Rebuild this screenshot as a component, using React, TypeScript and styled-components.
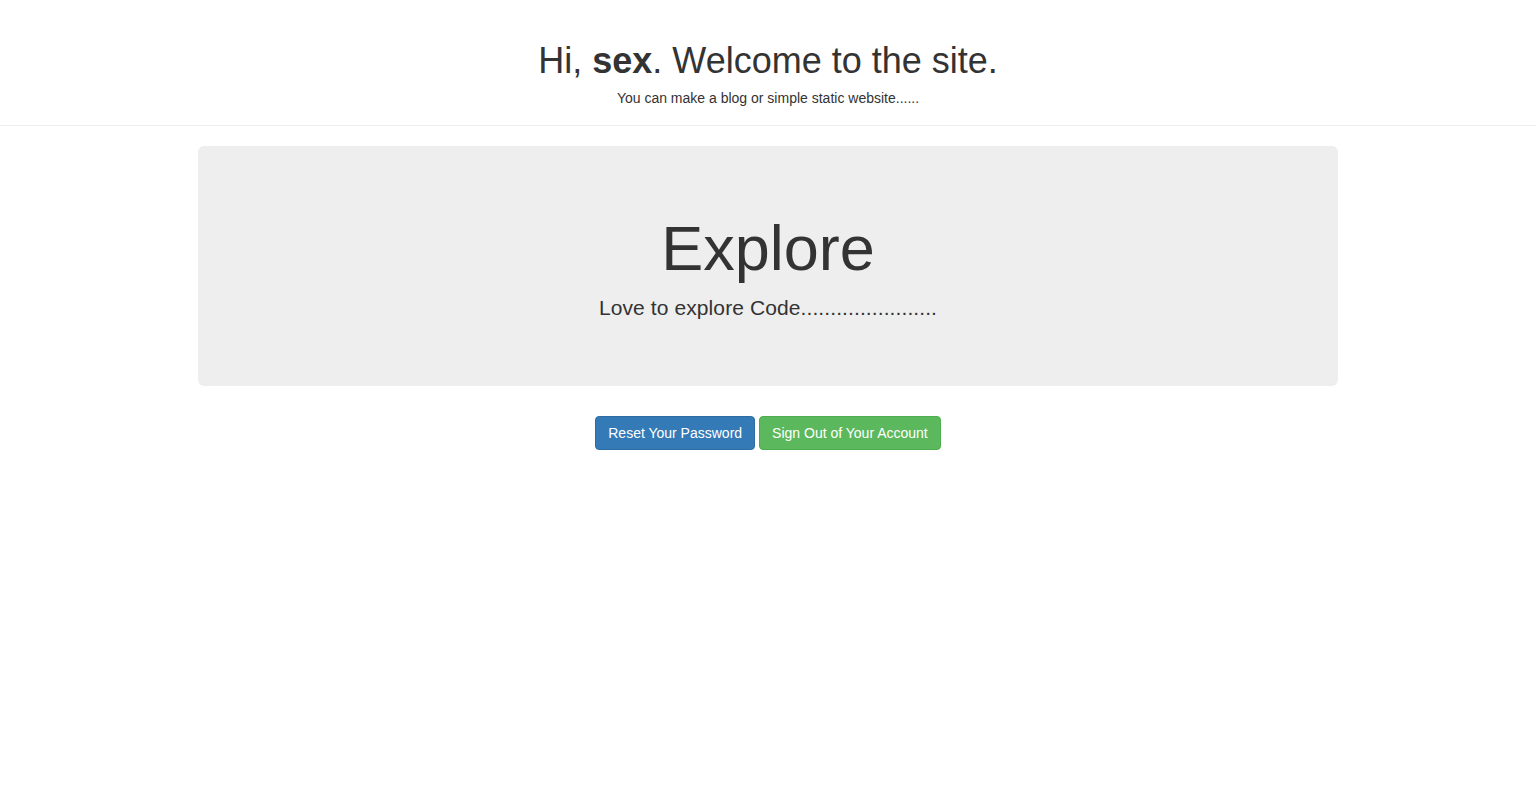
import React from "react";
import styled, { createGlobalStyle } from "styled-components";

const GlobalStyle = createGlobalStyle`
  html, body { margin: 0; padding: 0; background: #fff; }
  body {
    font-family: "Liberation Sans", Arial, Helvetica, sans-serif;
    font-size: 14px;
    line-height: 1.42857143;
    color: #333;
  }
  * { box-sizing: border-box; }
`;

const PageHeader = styled.header`
  padding: 41px 0 9px;
  border-bottom: 1px solid #eee;
  text-align: center;
`;

const Title = styled.h1`
  margin: 0 0 7px;
  font-size: 36px;
  font-weight: 500;
  line-height: 1.1;
`;

const Lead = styled.p`
  margin: 0 0 8px;
`;

const Container = styled.main`
  width: 1170px;
  margin: 20px auto 0;
  padding: 0 15px;
`;

const Jumbotron = styled.section`
  padding: 48px 60px;
  margin-bottom: 30px;
  background: #eee;
  border-radius: 6px;
  text-align: center;
`;

const BigTitle = styled.h1`
  margin: 20px 0 10px;
  font-size: 63px;
  font-weight: 500;
  line-height: 1.1;
`;

const Sub = styled.p`
  margin: 0 0 15px;
  font-size: 21px;
  font-weight: 200;
  line-height: 1.42857143;
  letter-spacing: 0.1px;
`;

const Actions = styled.div`
  display: flex;
  justify-content: center;
  gap: 4px;
`;

const Button = styled.a<{ $variant: "primary" | "success" }>`
  display: inline-block;
  padding: 6px 12px;
  font-size: 14px;
  line-height: 20px;
  color: #fff;
  text-decoration: none;
  border-radius: 4px;
  border: 1px solid ${(p) => (p.$variant === "primary" ? "#2e6da4" : "#4cae4c")};
  background: ${(p) => (p.$variant === "primary" ? "#337ab7" : "#5cb85c")};
  cursor: pointer;
`;

export default function App() {
  return (
    <>
      <GlobalStyle />
      <PageHeader>
        <Title>
          Hi, <b>sex</b>. Welcome to the site.
        </Title>
        <Lead>You can make a blog or simple static website......</Lead>
      </PageHeader>
      <Container>
        <Jumbotron>
          <BigTitle>Explore</BigTitle>
          <Sub>Love to explore Code.......................</Sub>
        </Jumbotron>
        <Actions>
          <Button $variant="primary" href="#">Reset Your Password</Button>
          <Button $variant="success" href="#">Sign Out of Your Account</Button>
        </Actions>
      </Container>
    </>
  );
}
